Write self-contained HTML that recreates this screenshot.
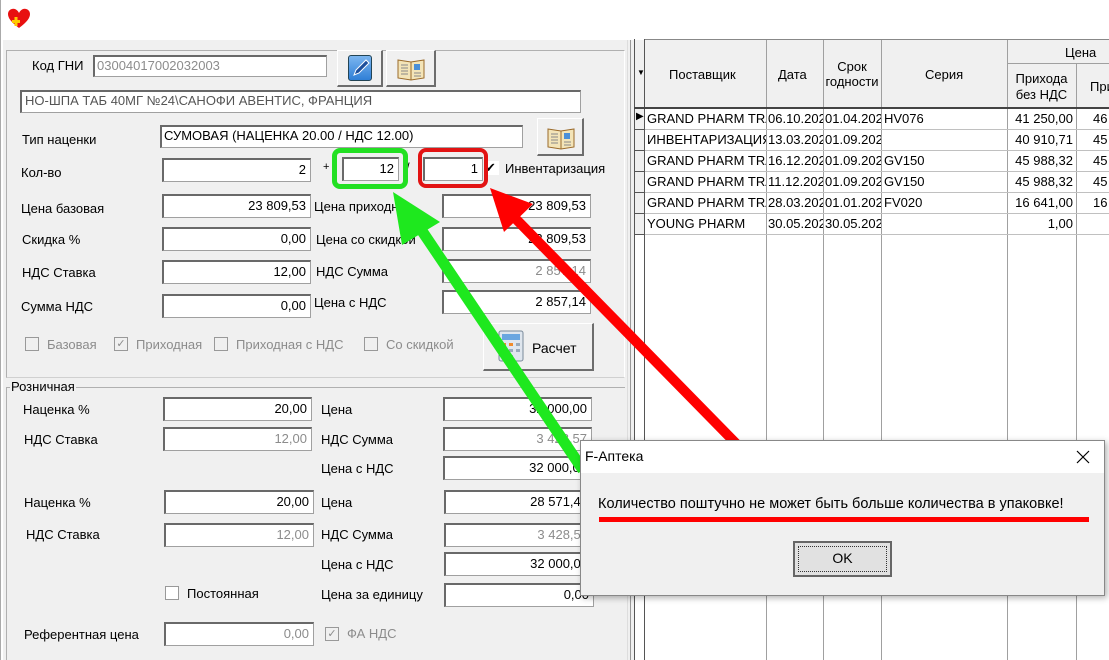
<!DOCTYPE html>
<html><head><meta charset="utf-8"><style>
*{box-sizing:border-box;margin:0;padding:0}
body{width:1109px;height:660px;overflow:hidden;background:#fff;font-family:"Liberation Sans",sans-serif;font-size:13px;color:#000;position:relative}
.a{position:absolute}
.lp{left:3px;top:40px;width:624px;height:620px;background:#f0f0f0}
.lbl{position:absolute;font-size:13px;white-space:nowrap}
.in{position:absolute;background:#fff;border:1px solid #a0a0a0;border-top:2px solid #696969;border-left:2px solid #696969;text-align:right;padding-right:4px;font-size:13px;line-height:20px;height:24px;white-space:nowrap;overflow:hidden}
.g{color:#8c8c8c}
.btn{position:absolute;background:#f0f0f0;border:1px solid #fff;border-right:2px solid #6d6d6d;border-bottom:2px solid #6d6d6d}
.cb{position:absolute;width:14px;height:14px;border:1px solid #999;background:#f0f0f0}
.grid{left:640px;top:40px;width:469px;height:620px;background:#fff}
.vl{position:absolute;top:40px;width:1px;background:#a0a0a0;height:620px}
.hl{position:absolute;left:645px;height:1px;background:#c0c0c0;width:464px}
.cell{position:absolute;font-size:13px;white-space:nowrap;overflow:hidden;line-height:21px}
</style></head><body>
<svg class="a" style="left:7px;top:8px" width="24" height="22"><path d="M12 20 C4 14 1 10 1 6 C1 2 5 0 8 1 C10 2 11 3 12 5 C13 3 14 2 16 1 C19 0 23 2 23 6 C23 10 20 14 12 20Z" fill="#e81010"/><rect x="5" y="12" width="8" height="3" fill="#fc0"/><rect x="7.5" y="9" width="3" height="9" fill="#fc0"/></svg>
<div class="a" style="left:0;top:0;width:1px;height:660px;background:#aaa"></div>

<div class="a lp"></div>
<div class="a" style="left:6px;top:50px;width:619px;height:328px;border:1px solid #b0b0b0;border-right-color:#fff;border-bottom-color:#d0d0d0"></div>

<div class="lbl" style="left:32px;top:58px">Код ГНИ</div>
<div class="in g" style="left:93px;top:55px;width:234px;height:22px;text-align:left;padding-left:2px;line-height:18px">03004017002032003</div>
<div class="btn" style="left:337px;top:50px;width:46px;height:37px"><div class="a" style="left:10px;top:4px;width:24px;height:26px;background:linear-gradient(#7cb6f0,#2f7fd6);border:1px solid #245;border-radius:3px"></div><svg class="a" style="left:14px;top:8px" width="18" height="18"><path d="M2 16 L4 11 L14 1 L17 4 L7 14 Z" fill="#1c4f9c" stroke="#fff" stroke-width="1"/></svg></div>
<div class="btn" style="left:386px;top:50px;width:50px;height:37px"><svg class="a" style="left:9px;top:5px" width="30" height="26"><path d="M2 4 L15 6 L28 4 L28 22 L15 24 L2 22Z" fill="#f3e4b8" stroke="#9a6a2a"/><path d="M15 6V24" stroke="#9a6a2a"/><rect x="18" y="8" width="6" height="6" fill="#4a8fd8"/><path d="M5 9h7M5 12h7M5 15h7M5 18h7M18 17h7M18 20h7" stroke="#888"/></svg></div>

<div class="in" style="left:20px;top:90px;width:561px;height:23px;text-align:left;padding-left:3px;line-height:18px;color:#555">НО-ШПА ТАБ 40МГ №24\САНОФИ АВЕНТИС, ФРАНЦИЯ</div>

<div class="lbl" style="left:22px;top:132px">Тип наценки</div>
<div class="in" style="left:160px;top:125px;width:363px;height:23px;text-align:left;padding-left:2px;line-height:18px">СУМОВАЯ (НАЦЕНКА 20.00 / НДС 12.00)</div>
<div class="btn" style="left:537px;top:118px;width:47px;height:38px"><svg class="a" style="left:8px;top:6px" width="30" height="26"><path d="M2 4 L15 6 L28 4 L28 22 L15 24 L2 22Z" fill="#f3e4b8" stroke="#9a6a2a"/><path d="M15 6V24" stroke="#9a6a2a"/><rect x="18" y="8" width="6" height="6" fill="#4a8fd8"/><path d="M5 9h7M5 12h7M5 15h7M5 18h7M18 17h7M18 20h7" stroke="#888"/></svg></div>

<div class="lbl" style="left:21px;top:165px">Кол-во</div>
<div class="in" style="left:162px;top:158px;width:149px">2</div>
<div class="lbl" style="left:323px;top:161px;font-size:11px">+</div>
<div class="in" style="left:342px;top:157px;width:57px">12</div>
<div class="lbl" style="left:406px;top:160px">/</div>
<div class="in" style="left:423px;top:157px;width:60px">1</div>
<div class="cb" style="left:485px;top:161px;border:none;background:#fff;font-size:13px;line-height:14px">✔</div>
<div class="lbl" style="left:505px;top:161px">Инвентаризация</div>
<div class="a" style="left:332px;top:148px;width:76px;height:41px;border:5px solid #22e022;border-radius:8px"></div>
<div class="a" style="left:418px;top:148px;width:70px;height:40px;border:4px solid #e21313;border-radius:8px"></div>

<div class="lbl" style="left:21px;top:201px">Цена базовая</div>
<div class="in" style="left:162px;top:194px;width:149px">23 809,53</div>
<div class="lbl" style="left:314px;top:199px">Цена приходная</div>
<div class="in" style="left:442px;top:194px;width:149px">23 809,53</div>

<div class="lbl" style="left:22px;top:232px">Скидка %</div>
<div class="in" style="left:162px;top:227px;width:149px">0,00</div>
<div class="lbl" style="left:316px;top:232px">Цена со скидкой</div>
<div class="in" style="left:442px;top:227px;width:149px">23 809,53</div>

<div class="lbl" style="left:22px;top:265px">НДС Ставка</div>
<div class="in" style="left:162px;top:260px;width:149px">12,00</div>
<div class="lbl" style="left:316px;top:264px">НДС Сумма</div>
<div class="in g" style="left:442px;top:259px;width:149px">2 857,14</div>

<div class="lbl" style="left:21px;top:299px">Сумма НДС</div>
<div class="in" style="left:162px;top:294px;width:149px">0,00</div>
<div class="lbl" style="left:314px;top:295px">Цена с НДС</div>
<div class="in" style="left:442px;top:290px;width:149px">2 857,14</div>

<div class="cb" style="left:25px;top:337px"></div><div class="lbl g" style="left:47px;top:337px">Базовая</div>
<div class="cb g" style="left:114px;top:337px;font-size:11px;line-height:12px;text-align:center">✓</div><div class="lbl g" style="left:136px;top:337px">Приходная</div>
<div class="cb" style="left:214px;top:337px"></div><div class="lbl g" style="left:236px;top:337px">Приходная с НДС</div>
<div class="cb" style="left:364px;top:337px"></div><div class="lbl g" style="left:386px;top:337px">Со скидкой</div>
<div class="btn" style="left:483px;top:323px;width:111px;height:48px"><svg class="a" style="left:14px;top:6px" width="26" height="32"><rect x="1" y="1" width="24" height="30" rx="2" fill="#dfe6ee" stroke="#7a8a9a"/><rect x="4" y="4" width="18" height="6" fill="#6aa6e0"/><g fill="#f08a2a"><rect x="4" y="13" width="4" height="3"/><rect x="11" y="13" width="4" height="3"/></g><g fill="#9ab"><rect x="18" y="13" width="4" height="3"/><rect x="4" y="19" width="4" height="3"/><rect x="11" y="19" width="4" height="3"/><rect x="18" y="19" width="4" height="3"/><rect x="4" y="25" width="4" height="3"/><rect x="11" y="25" width="4" height="3"/></g></svg><div class="lbl" style="left:48px;top:16px;font-size:14px">Расчет</div></div>

<div class="a" style="left:6px;top:387px;width:619px;height:273px;border-top:1px solid #b0b0b0;border-left:1px solid #b0b0b0"></div>
<div class="lbl" style="left:10px;top:379px;background:#f0f0f0;padding:0 1px">Розничная</div>

<div class="lbl" style="left:23px;top:402px">Наценка %</div>
<div class="in" style="left:163px;top:397px;width:149px">20,00</div>
<div class="lbl" style="left:321px;top:402px">Цена</div>
<div class="in" style="left:443px;top:397px;width:149px">32 000,00</div>
<div class="lbl" style="left:24px;top:432px">НДС Ставка</div>
<div class="in g" style="left:163px;top:427px;width:149px">12,00</div>
<div class="lbl" style="left:321px;top:432px">НДС Сумма</div>
<div class="in g" style="left:443px;top:427px;width:149px">3 428,57</div>
<div class="lbl" style="left:321px;top:461px">Цена с НДС</div>
<div class="in" style="left:443px;top:456px;width:149px">32 000,00</div>

<div class="lbl" style="left:24px;top:495px">Наценка %</div>
<div class="in" style="left:164px;top:490px;width:150px">20,00</div>
<div class="lbl" style="left:321px;top:495px">Цена</div>
<div class="in" style="left:444px;top:490px;width:149px">28 571,43</div>
<div class="lbl" style="left:26px;top:527px">НДС Ставка</div>
<div class="in g" style="left:164px;top:523px;width:150px">12,00</div>
<div class="lbl" style="left:321px;top:527px">НДС Сумма</div>
<div class="in g" style="left:444px;top:523px;width:149px">3 428,57</div>
<div class="lbl" style="left:321px;top:557px">Цена с НДС</div>
<div class="in" style="left:444px;top:552px;width:149px">32 000,00</div>
<div class="cb" style="left:165px;top:586px;background:#fff"></div>
<div class="lbl" style="left:187px;top:586px">Постоянная</div>
<div class="lbl" style="left:321px;top:587px">Цена за единицу</div>
<div class="in" style="left:444px;top:583px;width:150px">0,00</div>
<div class="lbl" style="left:24px;top:627px">Референтная цена</div>
<div class="in g" style="left:164px;top:622px;width:150px">0,00</div>
<div class="cb g" style="left:325px;top:627px;font-size:11px;line-height:12px;text-align:center">✓</div>
<div class="lbl g" style="left:347px;top:626px">ФА НДС</div>

<div class="a" style="left:627px;top:40px;width:13px;height:620px;background:#f0f0f0;border-left:1px solid #ddd"></div>
<div class="a" style="left:630px;top:40px;width:1px;height:620px;background:#999"></div>

<div class="a grid"></div>
<div class="a" style="left:634px;top:39px;width:475px;height:1px;background:#888"></div>
<div class="a" style="left:634px;top:39px;width:11px;height:621px;background:#fff;border-right:1px solid #555;border-left:1px solid #555"></div>
<div class="a" style="left:645px;top:40px;width:464px;height:68px;background:#f0f0f0"></div>
<div class="a" style="left:635px;top:40px;width:9px;height:68px;background:#f0f0f0"></div>
<div class="vl" style="left:766px"></div><div class="vl" style="left:823px"></div><div class="vl" style="left:881px"></div><div class="vl" style="left:1007px"></div><div class="vl" style="left:1076px;top:63px;height:597px"></div>
<div class="a" style="left:1007px;top:63px;width:102px;height:1px;background:#a0a0a0"></div>
<div class="a" style="left:634px;top:107px;width:475px;height:2px;background:#444"></div>
<div class="lbl" style="left:637px;top:68px;font-size:8px">▼</div>
<div class="lbl" style="left:669px;top:67px">Поставщик</div>
<div class="lbl" style="left:778px;top:67px">Дата</div>
<div class="lbl" style="left:823px;top:59px;width:58px;text-align:center;line-height:15px">Срок<br>годности</div>
<div class="lbl" style="left:925px;top:67px">Серия</div>
<div class="lbl" style="left:1065px;top:45px">Цена</div>
<div class="lbl" style="left:1007px;top:71px;width:69px;text-align:center;line-height:16px">Прихода<br>без НДС</div>
<div class="lbl" style="left:1090px;top:79px">При</div>

<div class="hl" style="top:129px"></div><div class="hl" style="top:150px"></div><div class="hl" style="top:171px"></div><div class="hl" style="top:192px"></div><div class="hl" style="top:213px"></div><div class="hl" style="top:234px"></div>
<div class="a" style="left:635px;top:109px;width:9px;height:126px;background:repeating-linear-gradient(#f0f0f0 0 20px,#555 20px 21px)"></div>
<div class="lbl" style="left:636px;top:111px;font-size:10px">▶</div>

<div class="cell" style="left:647px;top:108px;width:119px">GRAND PHARM TRADE</div><div class="cell" style="left:768px;top:108px;width:55px">06.10.2021</div><div class="cell" style="left:825px;top:108px;width:56px">01.04.2023</div><div class="cell" style="left:884px;top:108px">HV076</div><div class="cell" style="left:1007px;top:108px;width:66px;text-align:right">41 250,00</div><div class="cell" style="left:1093px;top:108px">46</div>
<div class="cell" style="left:647px;top:129px;width:119px">ИНВЕНТАРИЗАЦИЯ</div><div class="cell" style="left:768px;top:129px;width:55px">13.03.2021</div><div class="cell" style="left:825px;top:129px;width:56px">01.09.2023</div><div class="cell" style="left:1007px;top:129px;width:66px;text-align:right">40 910,71</div><div class="cell" style="left:1093px;top:129px">45</div>
<div class="cell" style="left:647px;top:150px;width:119px">GRAND PHARM TRADE</div><div class="cell" style="left:768px;top:150px;width:55px">16.12.2021</div><div class="cell" style="left:825px;top:150px;width:56px">01.09.2023</div><div class="cell" style="left:884px;top:150px">GV150</div><div class="cell" style="left:1007px;top:150px;width:66px;text-align:right">45 988,32</div><div class="cell" style="left:1093px;top:150px">45</div>
<div class="cell" style="left:647px;top:171px;width:119px">GRAND PHARM TRADE</div><div class="cell" style="left:768px;top:171px;width:55px">11.12.2021</div><div class="cell" style="left:825px;top:171px;width:56px">01.09.2023</div><div class="cell" style="left:884px;top:171px">GV150</div><div class="cell" style="left:1007px;top:171px;width:66px;text-align:right">45 988,32</div><div class="cell" style="left:1093px;top:171px">45</div>
<div class="cell" style="left:647px;top:192px;width:119px">GRAND PHARM TRADE</div><div class="cell" style="left:768px;top:192px;width:55px">28.03.2021</div><div class="cell" style="left:825px;top:192px;width:56px">01.01.2023</div><div class="cell" style="left:884px;top:192px">FV020</div><div class="cell" style="left:1007px;top:192px;width:66px;text-align:right">16 641,00</div><div class="cell" style="left:1093px;top:192px">16</div>
<div class="cell" style="left:647px;top:213px;width:119px">YOUNG PHARM</div><div class="cell" style="left:768px;top:213px;width:55px">30.05.2021</div><div class="cell" style="left:825px;top:213px;width:56px">30.05.2021</div><div class="cell" style="left:1007px;top:213px;width:66px;text-align:right">1,00</div>

<svg class="a" style="left:0;top:0" width="1109" height="660">
<line x1="583" y1="470" x2="420" y2="228" stroke="#1ee81e" stroke-width="11"/>
<polygon points="393,192 440,222 402,245" fill="#1ee81e"/>
<line x1="765" y1="473" x2="512" y2="215" stroke="#f00" stroke-width="10"/>
<polygon points="490,188 533,204 504,232" fill="#f00"/>
</svg>

<div class="a" style="left:580px;top:440px;width:525px;height:156px;background:#f0f0f0;border:1px solid #888;box-shadow:2px 2px 6px rgba(0,0,0,.3)">
<div class="a" style="left:0;top:0;width:523px;height:32px;background:#fff"></div>
<div class="lbl" style="left:4px;top:7px;font-size:14px">F-Аптека</div>
<svg class="a" style="left:495px;top:9px" width="14" height="14"><path d="M1 1L13 13M13 1L1 13" stroke="#000" stroke-width="1.2"/></svg>
<div class="lbl" style="left:17px;top:55px;font-size:14.5px">Количество поштучно не может быть больше количества в упаковке!</div>
<div class="a" style="left:18px;top:76px;width:490px;height:5px;background:#f00"></div>
<div class="a" style="left:212px;top:100px;width:99px;height:36px;border:2px solid #666;background:#e1e1e1"><div class="a" style="left:3px;top:3px;width:89px;height:26px;border:1px dotted #333"></div><div class="lbl" style="left:0;top:7px;width:95px;text-align:center;font-size:14px">OK</div></div>
</div>
</body></html>
